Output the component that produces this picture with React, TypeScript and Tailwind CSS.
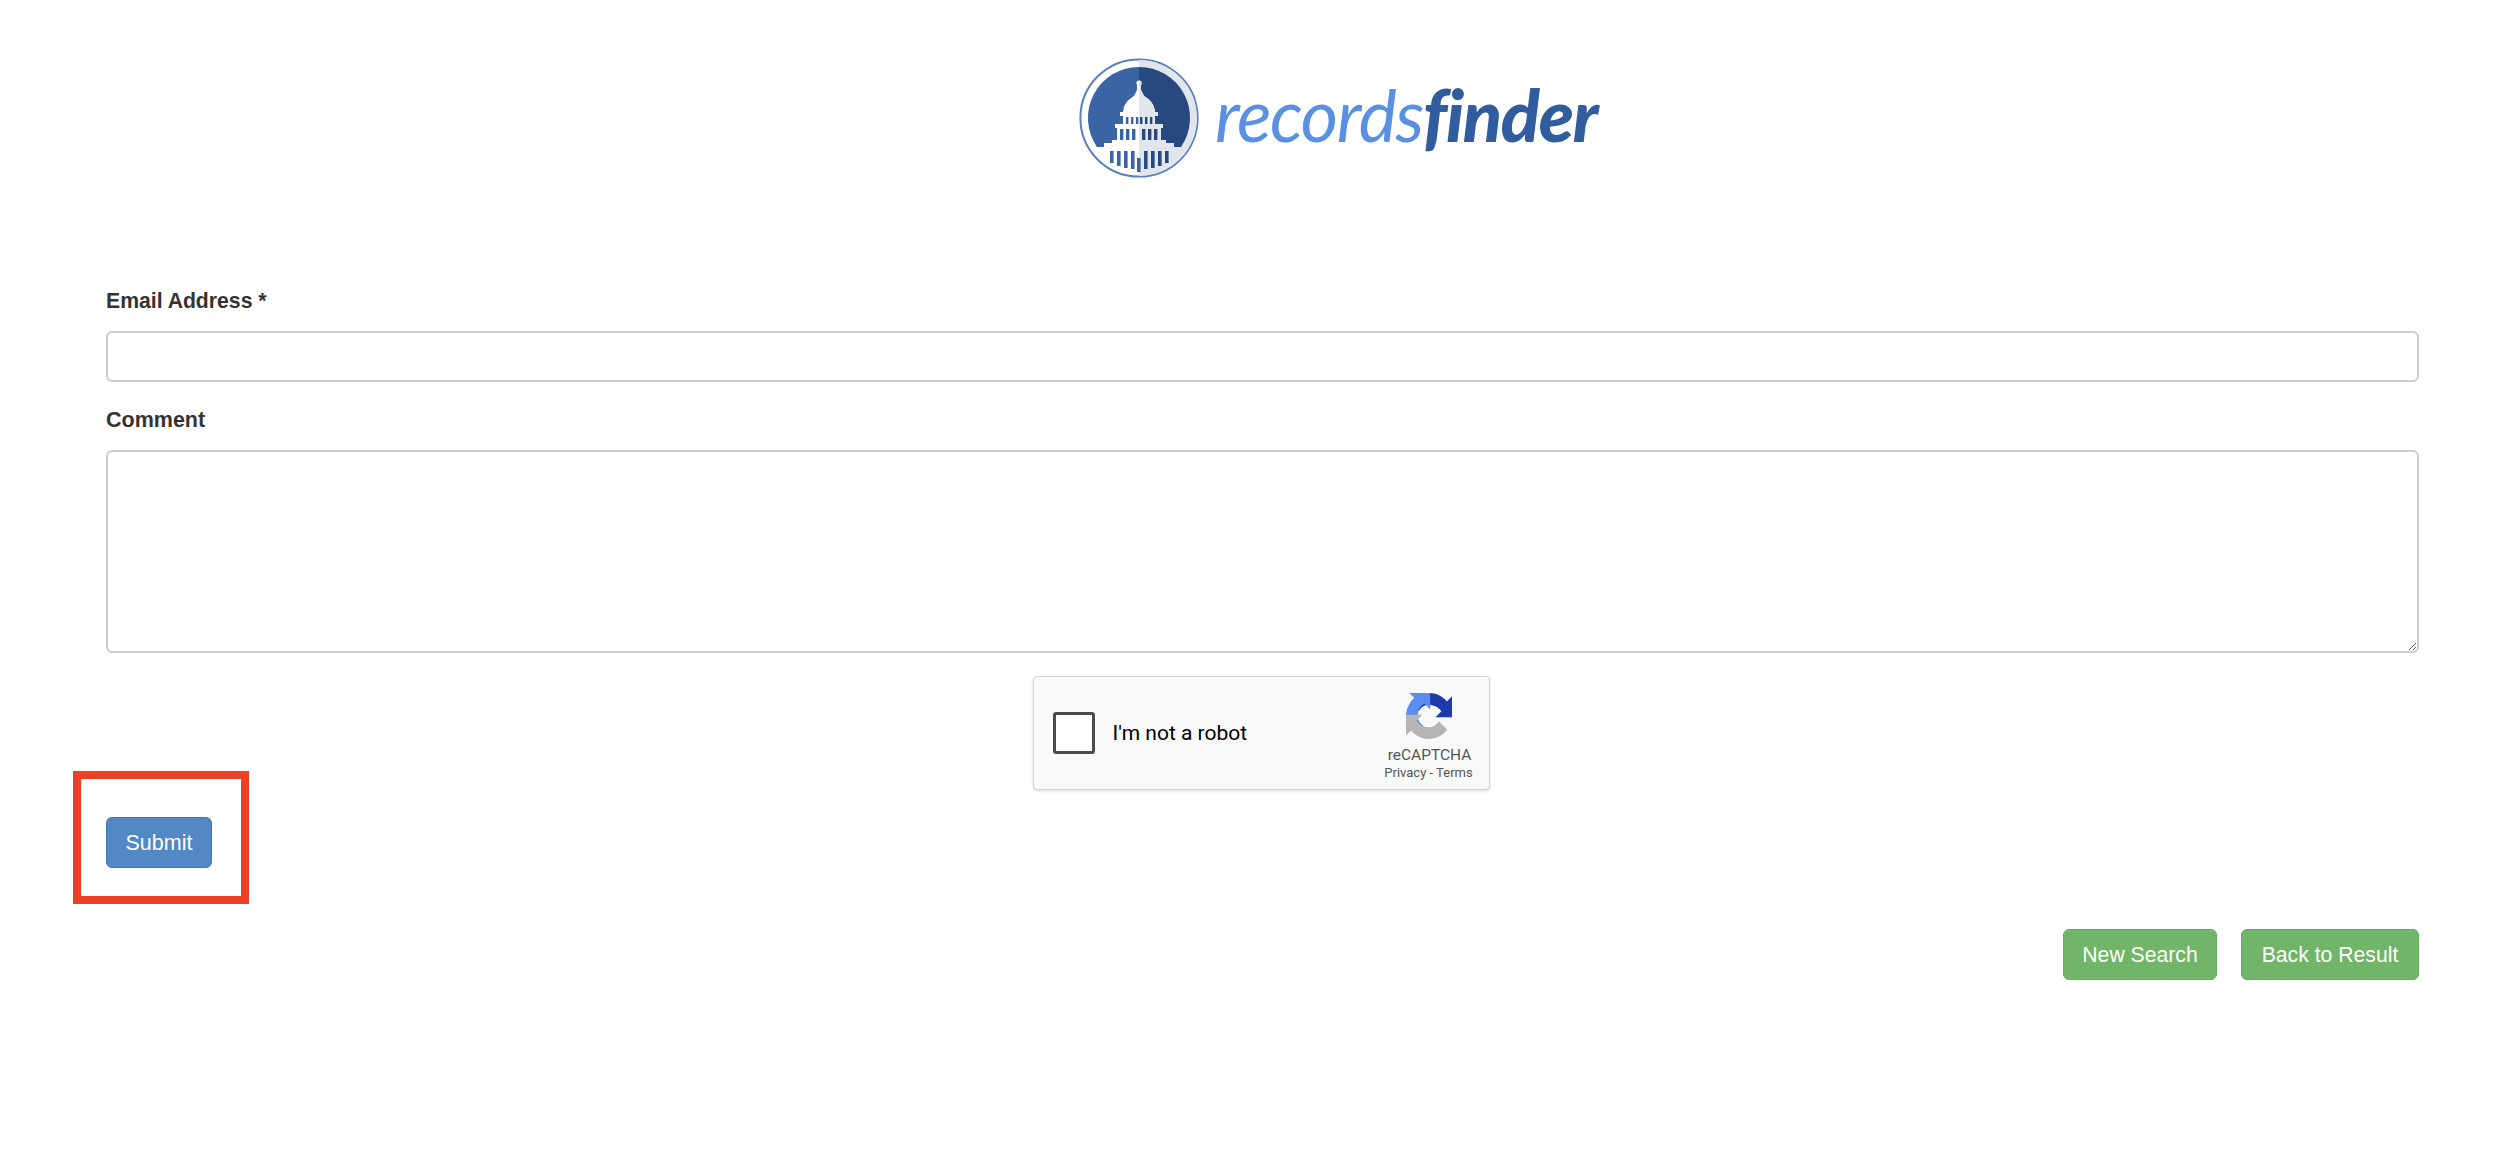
const sans = "font-['Liberation_Sans',Arial,sans-serif]"

const Building = ({ fill }: { fill: string }) => (
  <g fill={fill}>
    <rect x="58" y="26" width="4" height="10" />
    <circle cx="60" cy="25" r="2.6" />
    <path d="M44 55c0-9 6-14 11-17l3-6h4l3 6c5 3 11 8 11 17z" />
    <rect x="41" y="54" width="38" height="4" />
    <rect x="44" y="58" width="32" height="9" />
    <rect x="36" y="66" width="48" height="4" />
    <rect x="38" y="70" width="44" height="14" />
    <rect x="33" y="82" width="54" height="4" />
    <rect x="25" y="85" width="70" height="5" />
    <path d="M4 89h112v31H4z" clipPath="url(#ring)" />
  </g>
)

const CapitolLogo = () => (
  <svg viewBox="0 0 120 120" className="w-[120px] h-[120px] shrink-0">
    <defs>
      <clipPath id="ring"><circle cx="60" cy="60" r="57" /></clipPath>
      <clipPath id="right"><rect x="60" y="0" width="60" height="120" /></clipPath>
    </defs>
    <circle cx="60" cy="60" r="58.6" fill="#fff" stroke="#5a80ba" strokeWidth="2" />
    <path d="M60 2a58 58 0 0 1 0 116z" fill="#e1e5ec" />
    {/* disc */}
    <path d="M60 9A51 51 0 0 0 18 89h42z" fill="#3a64a4" />
    <path d="M60 9a51 51 0 0 1 42 80H60z" fill="#27497f" />
    {/* building */}
    <Building fill="#fff" />
    <g clipPath="url(#right)">
      <Building fill="#e1e5ec" />
    </g>
    {/* columns */}
    <g fill="#3a64a4">
      {[47, 52, 57].map((x) => <rect key={x} x={x} y="59" width="2.4" height="7" />)}
      {[41, 47, 53].map((x) => <rect key={x} x={x} y="71" width="3.4" height="11" />)}
      {[31, 38, 45, 52].map((x, i) => <rect key={x} x={x} y={93} width="3.6" height={[12, 15, 17, 18][i]} />)}
      <rect x="58" y="100" width="3.6" height="14" />
    </g>
    <g fill="#27497f">
      {[61, 66, 71].map((x) => <rect key={x} x={x} y="59" width="2.4" height="7" />)}
      {[63, 69, 75].map((x) => <rect key={x} x={x} y="71" width="3.4" height="11" />)}
      {[65, 72, 79, 86].map((x, i) => <rect key={x} x={x} y={93} width="3.6" height={[18, 17, 15, 12][i]} />)}
    </g>
  </svg>
)

const RecaptchaIcon = () => (
  <svg viewBox="0 0 64 64" className="w-[46px] h-[46px]">
    <path d="M64 31.955l-.033-1.37V4.687l-7.16 7.16C50.948 4.674 42.033.093 32.05.093c-10.4 0-19.622 4.96-25.458 12.64l11.736 11.86a15.55 15.55 0 0 1 4.754-5.334c2.05-1.6 4.952-2.906 9.968-2.906.606 0 1.074.07 1.418.2 6.216.49 11.605 3.92 14.79 8.897l-8.3 8.3c10.514-.04 22.39-.065 28.04.006" fill="#1c3aa9" />
    <path d="M31.95.002l-1.37.033H4.687l7.16 7.16C4.674 13.053.093 21.968.093 31.95c0 10.4 4.96 19.622 12.64 25.458l11.86-11.736a15.55 15.55 0 0 1-5.334-4.754c-1.6-2.05-2.906-4.952-2.906-9.968 0-.606.07-1.074.2-1.418.49-6.216 3.92-11.605 8.897-14.79l8.3 8.3c-.04-10.514-.065-22.39.006-28.04" fill="#5a8eee" />
    <path d="M.002 32l.033 1.37v25.892l7.16-7.16C13.053 59.33 21.968 63.907 31.95 63.907c10.4 0 19.622-4.96 25.458-12.64L45.672 39.407a15.55 15.55 0 0 1-4.754 5.334c-2.05 1.6-4.952 2.906-9.968 2.906-.606 0-1.074-.07-1.418-.2-6.216-.49-11.605-3.92-14.79-8.897l8.3-8.3c-10.514.04-22.39.065-28.04-.006" fill="#b5b5b5" />
  </svg>
)

const GreenButton = ({ label, width }: { label: string; width: string }) => (
  <button className={`h-[51px] ${width} pt-[1px] rounded-[6px] border border-[#66ad5c] bg-[#70b568] text-white text-[21.2px]`}>
    {label}
  </button>
)

export default function App() {
  return (
    <div className={`min-h-[1152px] bg-white pl-[106px] pr-[81px] pt-[57px] ${sans}`}>
      {/* LOGO */}
      <div className="ml-[973px] h-[122px] flex items-center gap-[16px]">
        <CapitolLogo />
        <div className="font-['Lato',sans-serif] italic text-[72px] leading-none tracking-[-0.018em] -mt-[8px]">
          <span className="text-[#5a90e2] font-normal">records</span>
          <span className="text-[#315c9e] font-black">finder</span>
        </div>
      </div>

      {/* FORM */}
      <div className="mt-[106px]">
        <label className="block h-[32px] mb-[14px] text-[21.2px] leading-[32px] font-bold text-[#333]">Email Address *</label>
        <input className="block w-full h-[51px] rounded-[6px] border-2 border-[#ccc] bg-white" />
        <label className="block mt-[22px] h-[32px] mb-[14px] text-[21.5px] leading-[32px] font-bold text-[#333]">Comment</label>
        <textarea className="block w-full h-[203px] rounded-[6px] border-2 border-[#ccc] bg-white" />

        {/* CAPTCHA */}
        <div className="mt-[23px] mr-[3px] flex justify-center">
          <div className="w-[457px] h-[114px] rounded-[4px] border border-[#d3d3d3] bg-[#f9f9f9] shadow-[0_1px_3px_rgba(0,0,0,0.15)] flex items-center pl-[19px] pr-[14px] font-['Roboto',sans-serif]">
            <div className="w-[42px] h-[42px] rounded-[3px] border-[3px] border-[#4a4a4a] bg-white" />
            <div className="ml-[18px] pt-[2px] text-[21px] text-black">I'm not a robot</div>
            <div className="ml-auto w-[90px] pt-[8px] flex flex-col items-center whitespace-nowrap">
              <div className="-ml-[2px] h-[46px]"><RecaptchaIcon /></div>
              <div className="mt-[6px] text-[15.5px] leading-[20px] text-[#555]">reCAPTCHA</div>
              <div className="-ml-[2px] text-[13px] leading-[16px] text-[#555]">Privacy - Terms</div>
            </div>
          </div>
        </div>

        {/* SUBMIT */}
        <div className="relative w-[106px] mt-[27px]">
          <button className="block w-[106px] h-[51px] pt-[1px] rounded-[6px] border border-[#3f78b8] bg-[#5288c6] text-white text-[21.5px]">Submit</button>
          <div className="absolute -left-[33px] -top-[46px] w-[176px] h-[133px] border-[8px] border-[#ee4025]" />
        </div>
      </div>

      {/* ACTIONS */}
      <div className="mt-[61px] flex justify-end gap-[24px]">
        <GreenButton label="New Search" width="w-[154px]" />
        <GreenButton label="Back to Result" width="w-[178px]" />
      </div>
    </div>
  )
}
